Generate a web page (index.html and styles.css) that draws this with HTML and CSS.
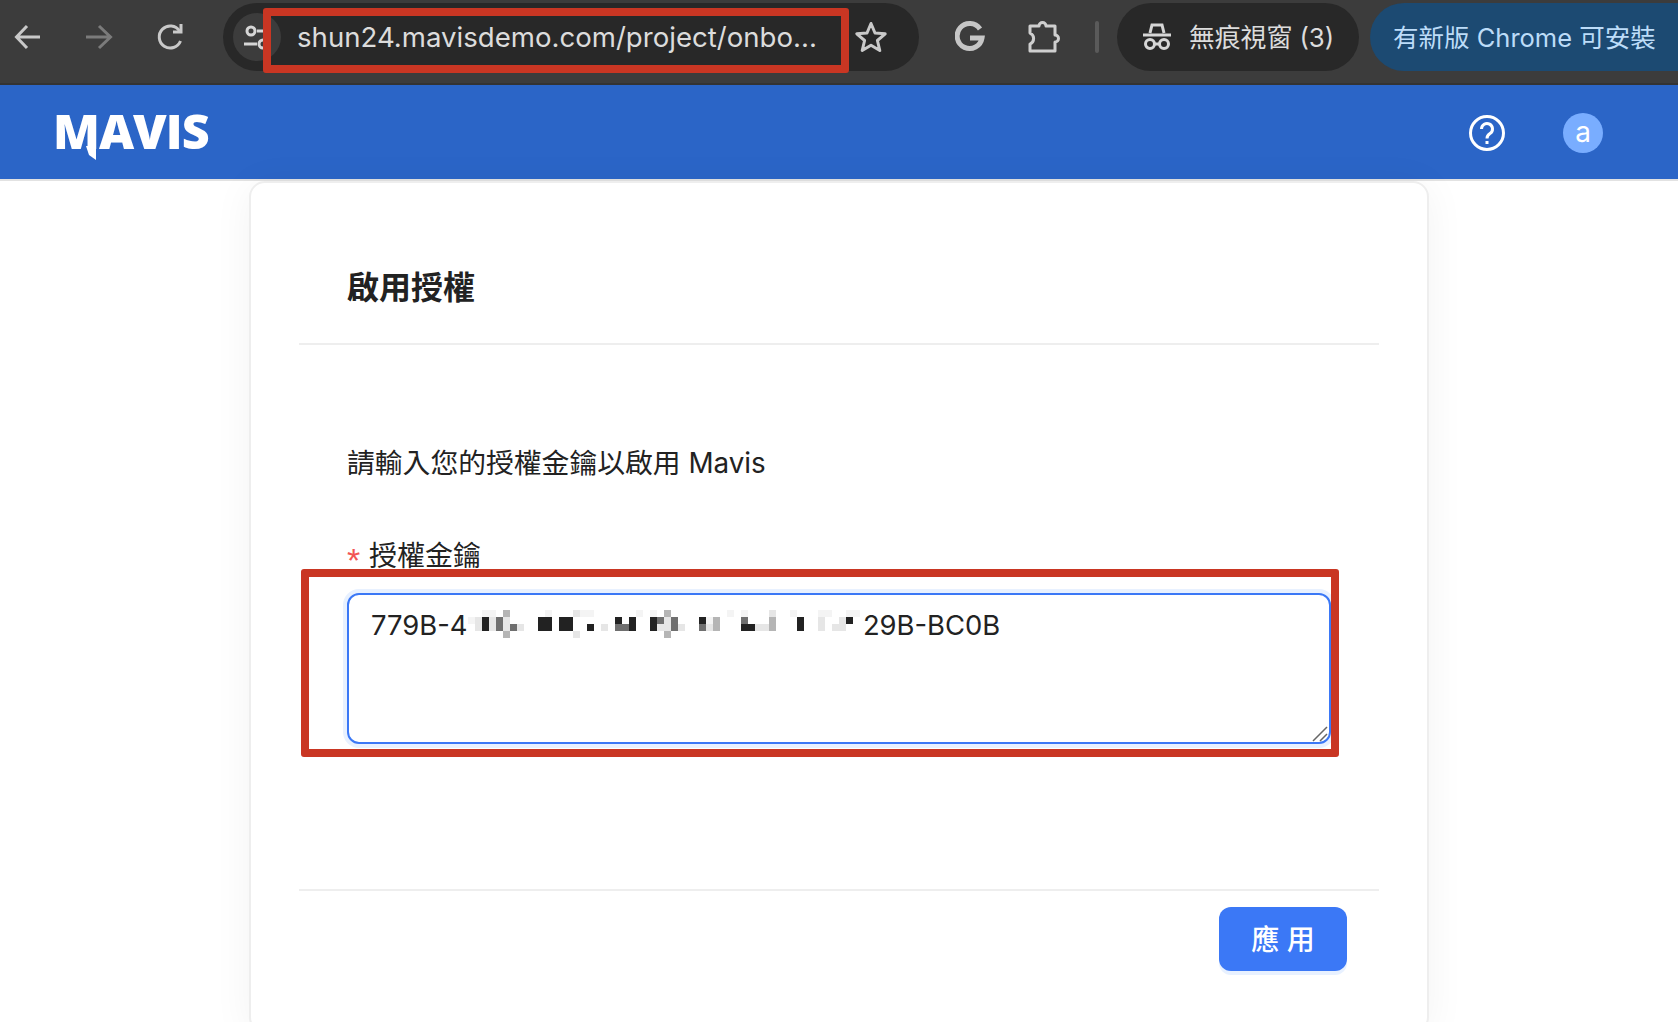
FILE: index.html
```html
<!DOCTYPE html>
<html lang="zh-Hant">
<head>
    <meta charset="UTF-8">
    <title>Mavis</title>
    <link rel="stylesheet" href="styles.css">
</head>
<body>
    <!-- Browser toolbar -->
    <div class="browser-bar">
        <div class="nav-btn">
            <svg width="30" height="30" viewBox="0 0 30 30" fill="none" stroke="#c9c9c9" stroke-width="3"><path d="M28 15H5M15 4 4.500 15 15 26"/></svg>
        </div>
        <div class="nav-btn">
            <svg width="30" height="30" viewBox="0 0 30 30" fill="none" stroke="#7b7b7b" stroke-width="3"><path d="M2 15h24M15 4l11.500 11L15 26"/></svg>
        </div>
        <div class="nav-btn">
            <svg width="30" height="30" viewBox="0 0 30 30" fill="none" stroke="#c9c9c9" stroke-width="3"><path d="M24.500 19a11 11 0 1 1-1-10"/><path d="M25 2v8h-8" /></svg>
        </div>

        <div class="omnibox">
            <div class="site-chip">
                <svg width="28" height="28" viewBox="0 0 28 28" fill="none" stroke="#d6d6d6" stroke-width="3"><circle cx="8" cy="8" r="4"/><path d="M14 8h13M1 21h13"/><circle cx="20" cy="21" r="4"/></svg>
            </div>
            <div class="url-text">shun24.mavisdemo.com/project/onbo...</div>
            <div class="star">
                <svg width="34" height="34" viewBox="0 0 34 34" fill="none" stroke="#c9c9c9" stroke-width="3" stroke-linejoin="round"><path d="M17 3.500l4 9.500 10.200.8-7.800 6.700 2.400 10L17 25.200l-8.800 5.300 2.400-10-7.800-6.700 10.200-.8z"/></svg>
            </div>
            <div class="url-mark"></div>
        </div>

        <div class="ext-icon ext-google">
            <svg width="30" height="32" viewBox="0 0 30 32" fill="none" stroke="#c6c6c6" stroke-width="5"><path d="M25 8a12.500 12.500 0 1 0 2 9H15"/></svg>
        </div>
        <div class="ext-icon ext-puzzle">
            <svg width="34" height="34" viewBox="0 0 34 34" fill="none" stroke="#cfcfcf" stroke-width="3" stroke-linejoin="round"><path d="M3 6h9a3.500 3.500 0 0 1 7 0h9v9a3.500 3.500 0 0 1 0 7v9H3v-7a6 6 0 0 0 0-11z"/></svg>
        </div>
        <div class="bar-sep"></div>
        <div class="incognito-pill">
            <svg width="30" height="30" viewBox="0 0 30 30" fill="none" stroke="#d6d6d6" stroke-width="3"><path d="M8 11l2-8h10l2 8M1 13h28"/><circle cx="8" cy="22" r="4.500"/><circle cx="22" cy="22" r="4.500"/><path d="M12.500 22h5"/></svg>
            <span>無痕視窗 (3)</span>
        </div>
        <div class="update-pill">有新版 Chrome 可安裝</div>
    </div>

    <!-- App header -->
    <header class="app-header">
        <div class="logo">
            MAVIS
            <svg class="logo-tail" width="10" height="14" viewBox="0 0 10 14"><path d="M0 0h10v14L3 9z" fill="#fff"/></svg>
        </div>
        <div class="header-right">
            <svg width="38" height="38" viewBox="0 0 38 38" fill="none" stroke="#fff" stroke-width="3"><circle cx="19" cy="19" r="16.500"/><path d="M13.500 15a5.500 5.500 0 1 1 8.500 4.600c-2 1.300-3 2.400-3 4.900"/><path d="M19 27v3"/></svg>
            <div class="avatar">a</div>
        </div>
    </header>

    <main class="card">
        <div class="card-head">
            <h2>啟用授權</h2>
        </div>
        <div class="card-body">
            <p class="intro">請輸入您的授權金鑰以啟用 Mavis</p>
            <label class="field-label" for="licenseKey"><span class="req">*</span>授權金鑰</label>
            <div class="field-wrap">
                <textarea id="licenseKey" class="license-input">779B-4                                                   29B-BC0B</textarea>
                <!-- pixelated part of the key -->
                <svg class="redacted" width="392" height="28" viewBox="0 0 392 28" shape-rendering="crispEdges">
                    <g fill="#f4f4f4"><rect x="14" y="0" width="14" height="7"/><rect x="77" y="0" width="7" height="7"/><rect x="112" y="0" width="14" height="7"/><rect x="168" y="0" width="7" height="7"/><rect x="182" y="0" width="7" height="7"/><rect x="259" y="0" width="7" height="7"/><rect x="273" y="0" width="7" height="7"/><rect x="322" y="0" width="7" height="7"/><rect x="350" y="0" width="14" height="7"/><rect x="378" y="0" width="14" height="7"/><rect x="0" y="7" width="7" height="7"/><rect x="238" y="7" width="14" height="7"/></g>
                    <g fill="#e6e6e6"><rect x="105" y="0" width="7" height="7"/><rect x="301" y="0" width="7" height="7"/><rect x="7" y="7" width="7" height="7"/><rect x="21" y="7" width="7" height="7"/><rect x="35" y="7" width="7" height="7"/><rect x="196" y="7" width="7" height="7"/><rect x="350" y="7" width="7" height="7"/><rect x="371" y="7" width="7" height="7"/><rect x="7" y="14" width="7" height="7"/><rect x="21" y="14" width="7" height="7"/><rect x="35" y="14" width="7" height="7"/><rect x="49" y="14" width="7" height="7"/><rect x="133" y="14" width="7" height="7"/><rect x="189" y="14" width="7" height="7"/><rect x="196" y="14" width="7" height="7"/><rect x="210" y="14" width="7" height="7"/><rect x="287" y="14" width="14" height="7"/><rect x="350" y="14" width="7" height="7"/><rect x="364" y="14" width="14" height="7"/><rect x="105" y="21" width="7" height="7"/><rect x="238" y="14" width="7" height="7"/></g>
                    <g fill="#b5b5b5"><rect x="245" y="7" width="7" height="14"/><rect x="301" y="7" width="7" height="14"/><rect x="35" y="0" width="7" height="7"/><rect x="196" y="0" width="7" height="7"/><rect x="35" y="21" width="7" height="7"/><rect x="196" y="21" width="7" height="7"/></g>
                    <g fill="#6f6f6f"><rect x="28" y="7" width="7" height="14"/><rect x="42" y="14" width="7" height="7"/><rect x="147" y="14" width="14" height="7"/><rect x="189" y="7" width="7" height="7"/><rect x="203" y="7" width="7" height="14"/><rect x="273" y="7" width="7" height="7"/><rect x="231" y="14" width="7" height="7"/></g>
                    <g fill="#222"><rect x="14" y="7" width="7" height="14"/><rect x="70" y="7" width="14" height="14"/><rect x="91" y="7" width="14" height="14"/><rect x="119" y="14" width="7" height="7"/><rect x="147" y="7" width="7" height="7"/><rect x="161" y="7" width="7" height="14"/><rect x="182" y="7" width="7" height="14"/><rect x="231" y="7" width="7" height="7"/><rect x="273" y="14" width="14" height="7"/><rect x="329" y="7" width="7" height="14"/><rect x="378" y="7" width="7" height="7"/></g>
                </svg>
                <svg class="resize-grip" width="16" height="16" viewBox="0 0 16 16" fill="none" stroke="#666" stroke-width="1.500"><path d="M1 15 15 1M8 15l7-7"/></svg>
                <div class="key-mark"></div>
            </div>
        </div>
        <div class="card-foot">
            <button class="apply-btn">應 用</button>
        </div>
    </main>
</body>
</html>
```

FILE: styles.css
```css
body {
    margin: 0;
    height: 1022px;
    overflow: hidden;
    background-color: white;
    font-family: "Inter", "Noto Sans CJK TC", sans-serif;
    color: #222;
}

/* Browser toolbar */
.browser-bar {
    display: flex;
    align-items: flex-start;
    height: 80px;
    padding: 3px 0 0 7px;
    background-color: #3c3c3c;
    border-bottom: 2px solid #333;
}

.nav-btn {
    display: flex;
    align-items: center;
    justify-content: center;
    width: 40px;
    height: 68px;
    margin-right: 32px;
    flex: none;
}

.omnibox {
    position: relative;
    display: flex;
    align-items: center;
    flex: none;
    width: 696px;
    height: 68px;
    padding-left: 10px;
    box-sizing: border-box;
    background-color: #282828;
    border-radius: 34px;
}

.site-chip {
    display: flex;
    align-items: center;
    justify-content: center;
    width: 48px;
    height: 48px;
    flex: none;
    background-color: #3c3c3c;
    border-radius: 50%;
}

.url-text {
    width: 540px;
    margin-left: 16px;
    flex: none;
    font-size: 27.6px;
    color: #dcdcdc;
    white-space: nowrap;
}

.star {
    display: flex;
    margin-left: 17px;
}

.url-mark {
    position: absolute;
    left: 40px;
    top: 5px;
    width: 586px;
    height: 65px;
    box-sizing: border-box;
    border: 8px solid #c93623;
    border-radius: 3px;
}

.ext-icon {
    display: flex;
    align-items: center;
    justify-content: center;
    width: 40px;
    height: 68px;
    flex: none;
}

.ext-google {
    margin-left: 31px;
}

.ext-puzzle {
    margin-left: 34px;
}

.bar-sep {
    width: 4px;
    height: 32px;
    margin: 18px 0 0 31px;
    flex: none;
    background-color: #5a5a5a;
    border-radius: 2px;
}

.incognito-pill {
    display: flex;
    align-items: center;
    width: 242px;
    height: 68px;
    margin-left: 18px;
    padding-left: 25px;
    box-sizing: border-box;
    flex: none;
    gap: 17px;
    background-color: #282828;
    border-radius: 34px;
    color: #dcdcdc;
    font-size: 25.8px;
    white-space: nowrap;
}

.incognito-pill span {
    padding-bottom: 3px;
}

.update-pill {
    display: flex;
    align-items: center;
    width: 340px;
    height: 68px;
    margin-left: 11px;
    padding: 0 0 3px 23px;
    box-sizing: border-box;
    flex: none;
    background-color: #1c4a72;
    border-radius: 34px;
    color: #bcdcf8;
    font-size: 25.5px;
    white-space: nowrap;
}

/* App header */
.app-header {
    display: flex;
    align-items: center;
    justify-content: space-between;
    height: 92px;
    padding: 2px 75px 0 53px;
    background-color: #2b65c7;
    border-bottom: 2px solid #e2e2e2;
}

.logo {
    position: relative;
    margin-bottom: 6px;
    font-family: "Open Sans", sans-serif;
    font-size: 48.5px;
    font-weight: 800;
    letter-spacing: -1px;
    line-height: 50px;
    color: white;
}

.logo-tail {
    position: absolute;
    left: 33px;
    bottom: -5px;
}

.header-right {
    display: flex;
    align-items: center;
    gap: 57px;
}

.avatar {
    width: 40px;
    height: 40px;
    background-color: #79adff;
    border-radius: 50%;
    color: white;
    font-size: 28px;
    line-height: 38px;
    text-align: center;
}

/* Card */
.card {
    width: 1180px;
    margin: 0 auto;
    box-sizing: border-box;
    background-color: white;
    border: 2px solid #eee;
    border-radius: 16px;
    box-shadow: 0 4px 40px rgba(0, 0, 0, 0.05);
}

.card-head {
    margin: 0 48px;
    padding: 81px 48px 31px;
    border-bottom: 2px solid #eee;
}

h2 {
    margin: 0;
    font-size: 32px;
    font-weight: 700;
    line-height: 48px;
    color: #222;
}

.card-body {
    margin: 0 48px;
    padding: 98px 48px 145px;
    border-bottom: 2px solid #eee;
}

.intro {
    margin: 0 0 53px;
    font-size: 27.8px;
    line-height: 40px;
}

.field-label {
    display: block;
    margin-bottom: 17px;
    font-size: 28px;
    line-height: 40px;
}

.req {
    display: inline-block;
    width: 22px;
    font-family: "Liberation Sans", sans-serif;
    font-size: 34px;
    line-height: 0;
    vertical-align: -6px;
    color: #f25555;
}

.field-wrap {
    position: relative;
    height: 151px;
}

.license-input {
    display: block;
    width: 100%;
    height: 151px;
    padding: 10px 22px;
    box-sizing: border-box;
    border: 2px solid #3b78f6;
    border-radius: 12px;
    box-shadow: 0 0 0 4px #e8f1ff;
    outline: none;
    resize: none;
    font-family: "Inter", sans-serif;
    font-size: 27.4px;
    word-spacing: 0.05px;
    line-height: 40px;
    color: #222;
}

.redacted {
    position: absolute;
    left: 121px;
    top: 17px;
}

.resize-grip {
    position: absolute;
    right: 3px;
    bottom: 2px;
}

.key-mark {
    position: absolute;
    left: -46px;
    top: -24px;
    right: -8px;
    bottom: -13px;
    border: 8px solid #c93623;
    border-radius: 3px;
    pointer-events: none;
}

.card-foot {
    display: flex;
    justify-content: flex-end;
    margin: 0 80px;
    padding: 16px 0 60px;
}

.apply-btn {
    width: 128px;
    height: 64px;
    padding: 0 0 2px;
    background-color: #3b78f6;
    border: none;
    border-radius: 12px;
    box-shadow: 0 4px 0 #e8f1ff;
    color: white;
    font-family: "Inter", "Noto Sans CJK TC", sans-serif;
    font-size: 28px;
    font-weight: 500;
    cursor: pointer;
}
```
